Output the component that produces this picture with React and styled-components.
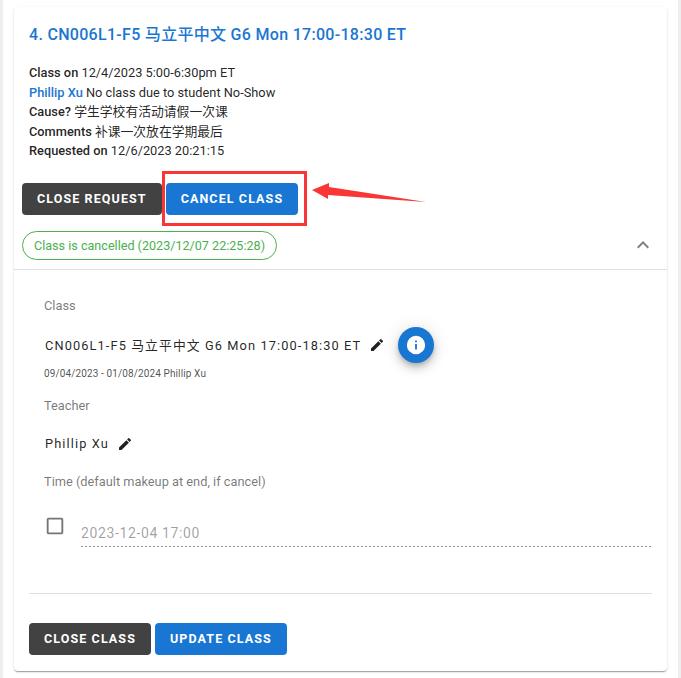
import React from "react";
import styled, { createGlobalStyle } from "styled-components";

const Global = createGlobalStyle`
  html, body { margin: 0; padding: 0; background: #fff; }
  body { font-family: Roboto, "Noto Sans CJK SC", sans-serif; }
`;

const Page = styled.div`
  width: 681px;
  height: 678px;
  box-sizing: border-box;
  border-left: 3px solid #eeeeee;
  border-right: 3px solid #eeeeee;
  padding: 7px 11px 0 11px;
  overflow: hidden;
`;

const Card = styled.div`
  width: 653px;
  height: 664px;
  box-sizing: border-box;
  background: #fff;
  border-radius: 4px;
  box-shadow: 0 2px 1px -1px rgba(0, 0, 0, 0.2), 0 1px 1px 0 rgba(0, 0, 0, 0.14), 0 1px 3px 0 rgba(0, 0, 0, 0.12);
`;

const Summary = styled.div`
  padding: 17px 8px 0 8px;
`;

const Title = styled.div`
  font-size: 16px;
  font-weight: 500;
  line-height: 20px;
  letter-spacing: 0.3px;
  color: #1976d2;
  padding-left: 7px;
  padding-top: 1px;
`;

const Details = styled.div`
  margin-top: 18px;
  padding-left: 7px;
  font-size: 12.8px;
  line-height: 19.6px;
  color: rgba(0, 0, 0, 0.87);
`;

const Label = styled.b`
  font-weight: 500;
`;

const TeacherName = styled.b`
  font-weight: 500;
  color: #1976d2;
`;

const ButtonRow = styled.div`
  display: flex;
  gap: 4px;
  position: relative;
  margin-top: ${(p) => p.$top || 0}px;
`;

const Button = styled.button`
  height: 32px;
  padding: 0 15px;
  border: 0;
  border-radius: 4px;
  background: ${(p) => (p.$primary ? "#1976d2" : "#424242")};
  color: #fff;
  font-family: inherit;
  font-size: 12.5px;
  font-weight: 700;
  letter-spacing: 1.1px;
`;

const Highlight = styled.div`
  position: absolute;
  left: 140px;
  top: -12px;
  width: 145px;
  height: 55px;
  box-sizing: border-box;
  border: 3px solid #f93535;
`;

const Arrow = styled.svg`
  position: absolute;
  left: 288px;
  top: -3px;
`;

const StatusRow = styled.div`
  display: flex;
  align-items: center;
  justify-content: space-between;
  margin-top: 16px;
  padding-right: 4px;
`;

const Chip = styled.div`
  height: 29px;
  box-sizing: border-box;
  display: flex;
  align-items: center;
  padding: 0 11px;
  border: 1px solid #4caf50;
  border-radius: 15px;
  font-size: 12.6px;
  color: #4caf50;
`;

const Divider = styled.div`
  height: 1px;
  background: #e0e0e0;
  margin-top: ${(p) => p.$top || 0}px;
`;

const Form = styled.div`
  padding: 0 15px;
`;

const FieldLabel = styled.div`
  font-size: 12.8px;
  line-height: 16px;
  color: rgba(0, 0, 0, 0.54);
  padding-left: 15px;
  margin-top: ${(p) => p.$top}px;
`;

const ValueRow = styled.div`
  display: flex;
  align-items: center;
  padding-left: 16px;
  margin-top: ${(p) => p.$top}px;
  height: 24px;
`;

const Value = styled.span`
  font-size: 12.8px;
  font-weight: 400;
  letter-spacing: 1.1px;
  color: rgba(0, 0, 0, 0.87);
`;

const Pencil = styled.svg`
  width: 16px;
  height: 16px;
  margin-left: 8px;
  fill: rgba(0, 0, 0, 0.87);
`;

const Fab = styled.div`
  width: 36px;
  height: 36px;
  margin-left: 13px;
  border-radius: 50%;
  background: #1976d2;
  display: flex;
  align-items: center;
  justify-content: center;
  box-shadow: 0 3px 5px -1px rgba(0, 0, 0, 0.2), 0 6px 10px 0 rgba(0, 0, 0, 0.14), 0 1px 18px 0 rgba(0, 0, 0, 0.12);
`;

const SubText = styled.div`
  font-size: 10px;
  line-height: 12px;
  letter-spacing: 0.12px;
  color: rgba(0, 0, 0, 0.7);
  padding-left: 15px;
  margin-top: 11px;
`;

const TimeRow = styled.div`
  display: flex;
  align-items: flex-start;
  margin-top: 20px;
`;

const CheckIcon = styled.svg`
  width: 22px;
  height: 22px;
  margin-left: 15px;
  margin-top: 5px;
  fill: rgba(0, 0, 0, 0.54);
`;

const TimeField = styled.div`
  flex: 1;
  margin-left: 15px;
  margin-top: 8px;
  height: 29px;
  box-sizing: border-box;
  padding-top: 6px;
  font-size: 14px;
  line-height: 18px;
  letter-spacing: 0.62px;
  color: rgba(0, 0, 0, 0.38);
  background: repeating-linear-gradient(to right, rgba(0, 0, 0, 0.42) 0, rgba(0, 0, 0, 0.42) 2px, transparent 2px, transparent 4px) left bottom / 100% 1px no-repeat;
`;

const PENCIL = "M3 17.25V21h3.75L17.81 9.94l-3.75-3.75L3 17.25zM20.71 7.04a1 1 0 0 0 0-1.41l-2.34-2.34a1 1 0 0 0-1.41 0l-1.83 1.83 3.75 3.75 1.83-1.83z";

function EditIcon() {
  return (
    <Pencil viewBox="0 0 24 24">
      <path d={PENCIL} />
    </Pencil>
  );
}

export default function App() {
  return (
    <Page>
      <Global />
      <Card>
        <Summary>
          <Title>4. CN006L1-F5 马立平中文 G6 Mon 17:00-18:30 ET</Title>
          <Details>
            <div><Label>Class on</Label> 12/4/2023 5:00-6:30pm ET</div>
            <div><TeacherName>Phillip Xu</TeacherName> No class due to student No-Show</div>
            <div><Label>Cause?</Label> 学生学校有活动请假一次课</div>
            <div><Label>Comments</Label> 补课一次放在学期最后</div>
            <div><Label>Requested on</Label> 12/6/2023 20:21:15</div>
          </Details>
          <ButtonRow $top={22}>
            <Button>CLOSE REQUEST</Button>
            <Button $primary>CANCEL CLASS</Button>
            <Highlight />
            <Arrow width="118" height="24" viewBox="0 0 118 24">
              <path d="M2 10 L19 3 L19 7 L116 22 L18 15 L18 19 Z" fill="#f93535" />
            </Arrow>
          </ButtonRow>
          <StatusRow>
            <Chip>Class is cancelled (2023/12/07 22:25:28)</Chip>
            <svg width="24" height="24" viewBox="0 0 24 24" fill="rgba(0,0,0,0.5)">
              <path d="M7.41 15.41 12 10.83l4.59 4.58L18 14l-6-6-6 6z" />
            </svg>
          </StatusRow>
        </Summary>
        <Divider $top={9} />
        <Form>
          <FieldLabel $top={28}>Class</FieldLabel>
          <ValueRow $top={19}>
            <Value>CN006L1-F5 马立平中文 G6 Mon 17:00-18:30 ET</Value>
            <EditIcon />
            <Fab>
              <svg width="22" height="22" viewBox="0 0 24 24" fill="#fff">
                <path d="M12 2a10 10 0 1 0 0 20 10 10 0 0 0 0-20zm1 15h-2v-6h2v6zm0-8h-2V7h2v2z" />
              </svg>
            </Fab>
          </ValueRow>
          <SubText>09/04/2023 - 01/08/2024 Phillip Xu</SubText>
          <FieldLabel $top={18}>Teacher</FieldLabel>
          <ValueRow $top={18}>
            <Value>Phillip Xu</Value>
            <EditIcon />
          </ValueRow>
          <FieldLabel $top={18}>Time (default makeup at end, if cancel)</FieldLabel>
          <TimeRow>
            <CheckIcon viewBox="0 0 24 24">
              <path d="M19 5v14H5V5h14m0-2H5c-1.1 0-2 .9-2 2v14c0 1.1.9 2 2 2h14c1.1 0 2-.9 2-2V5c0-1.1-.9-2-2-2z" />
            </CheckIcon>
            <TimeField>2023-12-04 17:00</TimeField>
          </TimeRow>
          <Divider $top={46} />
          <ButtonRow $top={29}>
            <Button>CLOSE CLASS</Button>
            <Button $primary>UPDATE CLASS</Button>
          </ButtonRow>
        </Form>
      </Card>
    </Page>
  );
}
